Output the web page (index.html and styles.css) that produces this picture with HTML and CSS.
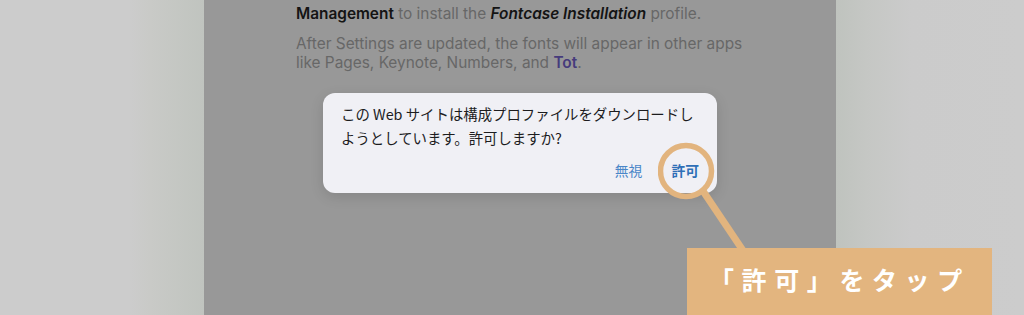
FILE: index.html
```html
<!DOCTYPE html>
<html lang="ja">
<head>
<meta charset="utf-8">
<link rel="stylesheet" href="styles.css">
</head>
<body>
<div class="stage">
  <div class="gutter gutter-left"></div>
  <main class="panel">
    <div class="copy">
      <p class="para para-first"><b class="dark">Management</b> to install the <b class="dark"><i>Fontcase Installation</i></b> profile.</p>
      <p class="para">After Settings are updated, the fonts will appear in other apps like Pages, Keynote, Numbers, and <span class="tot">Tot</span>.</p>
    </div>
    <div class="dialog">
      <p class="dialog-msg">この Web サイトは構成プロファイルをダウンロードしようとしています。許可しますか?</p>
      <div class="dialog-actions">
        <span class="btn">無視</span>
        <span class="btn btn-strong">許可</span>
      </div>
    </div>
    <svg class="pointer" width="120" height="130" viewBox="0 0 120 130">
      <circle cx="28" cy="38" r="25.5" fill="none" stroke="#e2b47e" stroke-width="5.5"/>
      <line x1="45" y1="58" x2="90" y2="125" stroke="#e2b47e" stroke-width="7"/>
    </svg>
  </main>
  <div class="gutter gutter-right"></div>
  <div class="callout">「許可」をタップ</div>
</div>
</body>
</html>
```
FILE: styles.css
```css
* { box-sizing: border-box; }
html, body { margin: 0; padding: 0; }
body {
  width: 1024px;
  height: 315px;
  overflow: hidden;
  background: #cccccc;
  font-family: Inter, "Noto Sans", "Noto Sans CJK JP", sans-serif;
}
.stage {
  position: relative;
  display: flex;
  width: 1024px;
  height: 315px;
}
.gutter-left {
  width: 204px;
  flex: none;
  background: linear-gradient(to right, #cccccc 0, #cccccc 130px, #c9cac7 150px, #c0c4bf 204px);
}
.gutter-right {
  flex: 1;
  background: linear-gradient(to right, #bfc3be 0, #c5c7c4 30px, #cbcbcb 75px, #cccccc 100%);
}
.panel {
  position: relative;
  width: 632px;
  flex: none;
  background: #989898;
}
.copy {
  padding: 4px 0 0 92px;
  width: 560px;
}
.para {
  margin: 0 0 10px;
  font-size: 15.4px;
  line-height: 19.5px;
  color: #676767;
}
.dark { color: #141414; font-weight: 600; }
.tot { color: #463b7c; font-weight: 600; }
.dialog {
  position: absolute;
  left: 119px;
  top: 93px;
  width: 394px;
  height: 100px;
  background: #f0f0f5;
  border-radius: 12px;
  padding: 9px 18px 0 18px;
  box-shadow: 0 4px 14px rgba(0,0,0,0.12);
  display: flex;
  flex-direction: column;
}
.dialog-msg {
  margin: 0;
  width: 354px;
  font-family: "Noto Sans CJK JP", sans-serif;
  font-size: 14.4px;
  line-height: 24px;
  color: #1c1c1e;
}
.dialog-actions {
  display: flex;
  justify-content: flex-end;
  gap: 29px;
  margin-top: 10px;
  font-family: "Noto Sans CJK JP", sans-serif;
  font-size: 13.8px;
  line-height: 20px;
}
.btn { color: #4a86c8; }
.btn-strong { color: #2f6fb7; font-weight: 700; }
.pointer {
  position: absolute;
  left: 454px;
  top: 133px;
}
.callout {
  position: absolute;
  left: 687px;
  top: 248px;
  width: 305px;
  height: 67px;
  background: #e3b57f;
  color: #ffffff;
  font-family: "Noto Sans CJK JP", sans-serif;
  font-weight: 700;
  font-size: 25px;
  letter-spacing: 7.6px;
  padding: 13px 0 0 22px;
}
```
